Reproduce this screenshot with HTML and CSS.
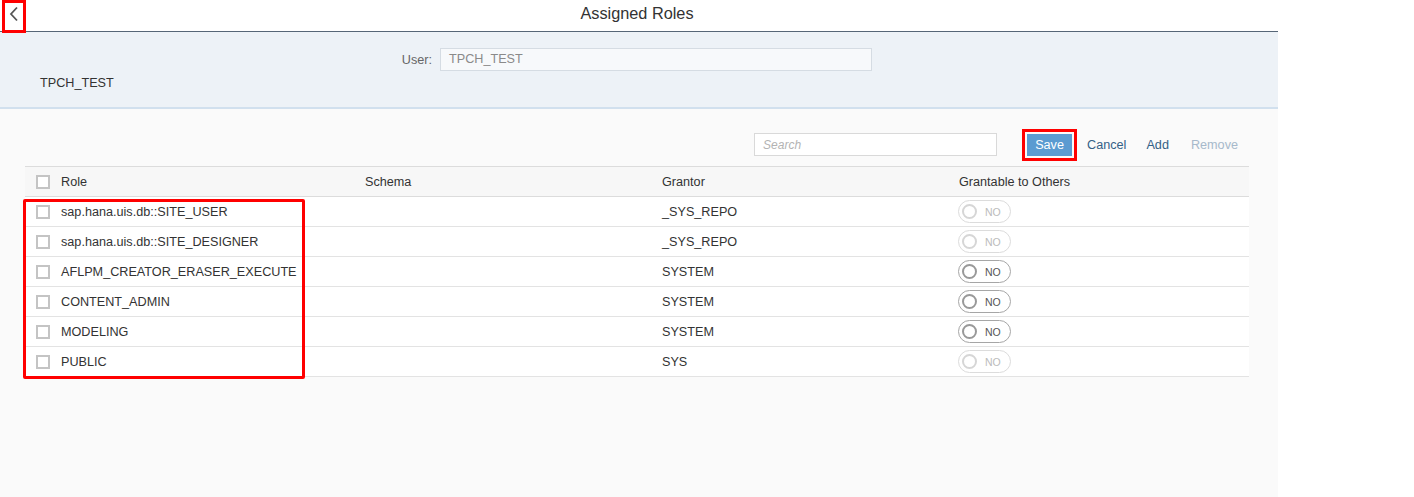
FILE: index.html
```html
<!DOCTYPE html>
<html>
<head>
<meta charset="utf-8">
<link rel="stylesheet" href="styles.css">
</head>
<body>
<div class="app">
  <header class="bar">
    <button class="back" aria-label="Back">
      <svg width="10" height="16" viewBox="0 0 10 16"><path d="M8 1.5 L2 8 L8 14.5" fill="none" stroke="#555" stroke-width="1.8"/></svg>
    </button>
    <div class="title">Assigned Roles</div>
  </header>
  <section class="band">
    <div class="user-row">
      <label class="user-label">User:</label>
      <div class="user-input">TPCH_TEST</div>
    </div>
    <div class="user-name">TPCH_TEST</div>
  </section>
  <main class="content">
    <div class="toolbar">
      <div class="search">Search</div>
      <button class="btn save">Save</button>
      <button class="btn link">Cancel</button>
      <button class="btn link add">Add</button>
      <button class="btn link disabled">Remove</button>
    </div>
    <div class="table">
      <div class="row head">
        <div class="cb-cell"><span class="cb"></span></div>
        <div>Role</div><div>Schema</div><div>Grantor</div><div>Grantable to Others</div>
      </div>
      <div class="row"><div class="cb-cell"><span class="cb"></span></div><div>sap.hana.uis.db::SITE_USER</div><div></div><div>_SYS_REPO</div><div><span class="sw off"><span class="knob"></span>NO</span></div></div>
      <div class="row"><div class="cb-cell"><span class="cb"></span></div><div>sap.hana.uis.db::SITE_DESIGNER</div><div></div><div>_SYS_REPO</div><div><span class="sw off"><span class="knob"></span>NO</span></div></div>
      <div class="row"><div class="cb-cell"><span class="cb"></span></div><div>AFLPM_CREATOR_ERASER_EXECUTE</div><div></div><div>SYSTEM</div><div><span class="sw"><span class="knob"></span>NO</span></div></div>
      <div class="row"><div class="cb-cell"><span class="cb"></span></div><div>CONTENT_ADMIN</div><div></div><div>SYSTEM</div><div><span class="sw"><span class="knob"></span>NO</span></div></div>
      <div class="row"><div class="cb-cell"><span class="cb"></span></div><div>MODELING</div><div></div><div>SYSTEM</div><div><span class="sw"><span class="knob"></span>NO</span></div></div>
      <div class="row"><div class="cb-cell"><span class="cb"></span></div><div>PUBLIC</div><div></div><div>SYS</div><div><span class="sw off"><span class="knob"></span>NO</span></div></div>
      <div class="highlight"></div>
    </div>
  </main>
</div>
</body>
</html>
```
FILE: styles.css
```css
* { box-sizing: border-box; }
html, body { margin: 0; padding: 0; background: #fff; }
body {
  font-family: "Liberation Sans", Arial, sans-serif;
  color: #333;
  font-size: 12.65px;
  height: 497px;
  overflow: hidden;
}
.app {
  width: 1278px;
  height: 497px;
  display: flex;
  flex-direction: column;
  background: #fafafa;
}
.bar {
  height: 32px;
  flex: none;
  background: #fff;
  border-bottom: 1px solid #566677;
  display: flex;
  align-items: center;
  position: relative;
}
.back {
  position: absolute;
  left: 5px;
  top: 3px;
  width: 18px;
  height: 27px;
  padding: 0;
  border: none;
  background: transparent;
  outline: 3px solid #f00;
  display: flex;
  align-items: flex-start;
  justify-content: center;
  padding-top: 3px;
}
.title {
  flex: 1;
  text-align: center;
  font-size: 16.3px;
  color: #333;
  margin-top: -4px;
  padding-right: 4px;
}
.band {
  height: 77px;
  flex: none;
  background: #edf2f7;
  border-bottom: 2px solid #d1e0ee;
  padding-top: 16px;
}
.user-row {
  display: flex;
  align-items: center;
  margin-left: 350px;
  gap: 8px;
}
.user-label {
  width: 82px;
  text-align: right;
  color: #666;
}
.user-input {
  width: 432px;
  height: 23px;
  border: 1px solid #d5dce3;
  background: #f7f9fb;
  color: #8a8a8a;
  padding: 3px 8px;
}
.user-name {
  margin: 5px 0 0 40px;
  color: #333;
}
.content {
  flex: 1;
  padding: 19px 29px 0 25px;
}
.toolbar {
  display: flex;
  justify-content: flex-end;
  align-items: center;
  height: 33px;
  padding-right: 11px;
}
.search {
  width: 243px;
  height: 23px;
  border: 1px solid #d9d9d9;
  background: #fff;
  color: #b3b3b3;
  font-style: italic;
  font-size: 12px;
  padding: 4px 8px;
  margin-right: 30px;
}
.btn {
  font-family: inherit;
  font-size: 12.65px;
  border: none;
  background: transparent;
  padding: 0;
  cursor: pointer;
}
.save {
  width: 45px;
  height: 22px;
  background: #5b9bd1;
  color: #fff;
  outline: 3px solid #f00;
  outline-offset: 2px;
  margin-right: 15px;
}
.link { color: #346187; margin-right: 20px; }
.link.add { margin-right: 22px; }
.link.disabled { color: #a7b9cb; margin-right: 0; }
.table {
  position: relative;
  margin-top: 5px;
  border-top: 1px solid #dcdcdc;
}
.row {
  display: grid;
  grid-template-columns: 36px 304px 297px 297px 1fr;
  height: 30px;
  align-items: center;
  background: #fff;
  border-bottom: 1px solid #e3e3e3;
  color: #333;
}
.row.head { background: #f7f7f7; border-bottom: 1px solid #dcdcdc; }
.row:last-of-type { border-bottom-color: #d0d0d0; }
.cb-cell { display: flex; align-items: center; padding-left: 11px; }
.cb {
  width: 14px;
  height: 14px;
  border: 2px solid #c4c4c4;
  background: #fff;
  display: block;
}
.sw {
  display: inline-flex;
  align-items: center;
  width: 53px;
  height: 23px;
  border: 1px solid #a6a6a6;
  border-radius: 12px;
  padding-left: 3px;
  font-size: 10.5px;
  color: #555;
  margin-left: -1px;
  gap: 8px;
}
.knob {
  width: 15px;
  height: 15px;
  border: 2px solid #999;
  border-radius: 50%;
  display: block;
}
.sw.off { border-color: #dcdcdc; color: #bbb; }
.sw.off .knob { border-color: #d6d6d6; }
.highlight {
  position: absolute;
  left: -2px;
  top: 32px;
  width: 282px;
  height: 180px;
  border: 3px solid #f00;
  border-radius: 2px;
  pointer-events: none;
}
```
